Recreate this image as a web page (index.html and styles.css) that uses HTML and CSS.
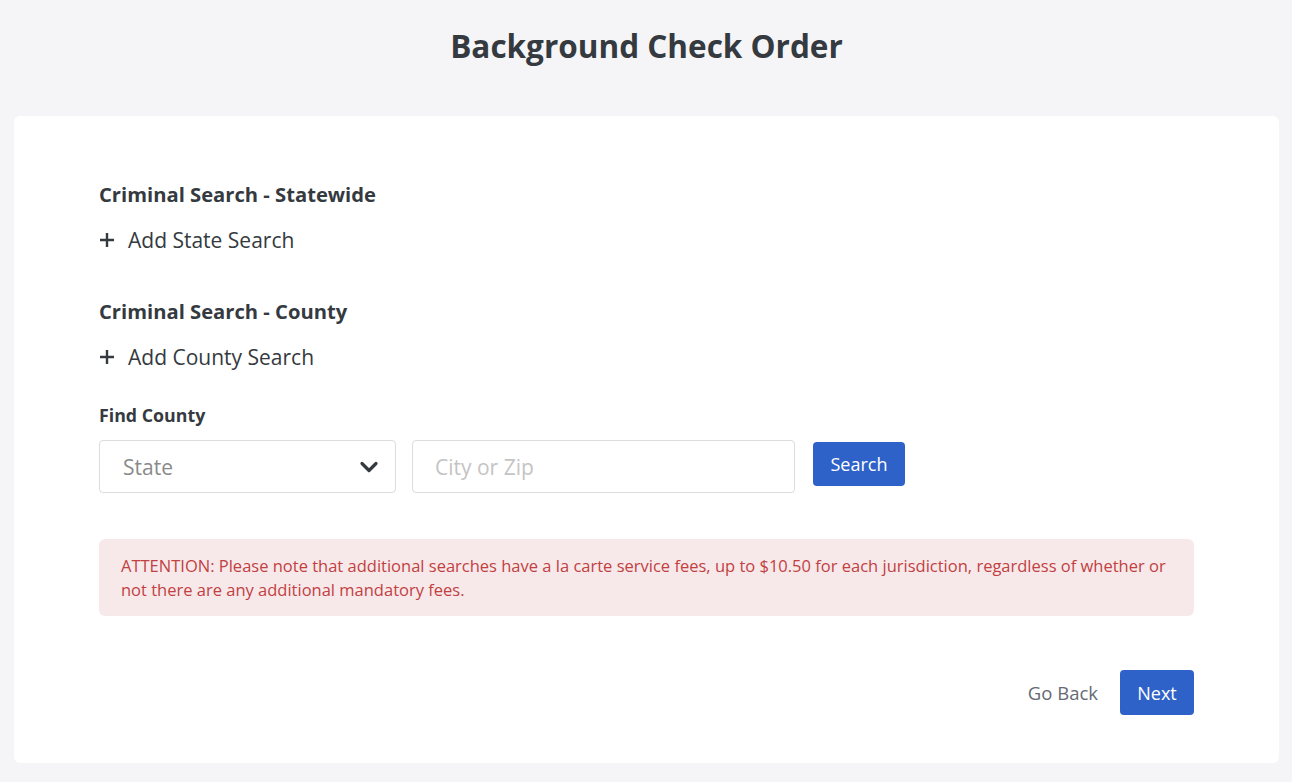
FILE: index.html
```html
<!DOCTYPE html>
<html lang="en">
<head>
    <meta charset="UTF-8">
    <meta name="viewport" content="width=device-width, initial-scale=1.0">
    <title>Background Check Order</title>
    <link rel="stylesheet" href="styles.css">
</head>
<body>
    <h1 class="page-title">Background Check Order</h1>
    <main class="card">
        <section class="search-group">
            <h2 class="group-title">Criminal Search - Statewide</h2>
            <button class="add-link">
                <svg class="plus" width="16" height="16" viewBox="0 0 16 16"><path d="M8 1V15M1 8H15" stroke="#343a40" stroke-width="2.4"/></svg>
                Add State Search
            </button>
        </section>
        <section class="search-group">
            <h2 class="group-title">Criminal Search - County</h2>
            <button class="add-link">
                <svg class="plus" width="16" height="16" viewBox="0 0 16 16"><path d="M8 1V15M1 8H15" stroke="#343a40" stroke-width="2.4"/></svg>
                Add County Search
            </button>
        </section>
        <div class="find-county">
            <label class="find-label">Find County</label>
            <div class="find-row">
                <div class="select-box">
                    <span class="placeholder">State</span>
                    <svg class="chevron" width="20" height="14" viewBox="0 0 20 14">
                        <path d="M3 3.5 L10 10.5 L17 3.5" fill="none" stroke="#343a40" stroke-width="3.2" stroke-linecap="round" stroke-linejoin="round"/>
                    </svg>
                </div>
                <input class="text-input" type="text" placeholder="City or Zip">
                <button class="btn-primary btn-search">Search</button>
            </div>
        </div>
        <div class="alert">
            ATTENTION: Please note that additional searches have a la carte service fees, up to $10.50 for each jurisdiction, regardless of whether or not there are any additional mandatory fees.
        </div>
        <footer class="actions">
            <button class="btn-link">Go Back</button>
            <button class="btn-primary btn-next">Next</button>
        </footer>
    </main>
</body>
</html>
```

FILE: styles.css
```css
/* Styles généraux */
body {
    font-family: "Open Sans", "Noto Sans", sans-serif;
    margin: 0;
    padding: 0 13px 19px 14px;
    background-color: #f5f5f7;
    color: #343a40;
}
.page-title {
    margin: 0;
    padding: 27px 0 51px;
    text-align: center;
    font-size: 31.5px;
    line-height: 38px;
    font-weight: 700;
}
.card {
    background-color: white;
    border-radius: 6px;
    padding: 64px 85px 48px;
}
.search-group {
    margin-bottom: 43px;
}
.group-title {
    margin: 0;
    font-size: 20.2px;
    line-height: 28px;
    font-weight: 700;
}
.add-link {
    display: flex;
    align-items: center;
    background: none;
    border: none;
    padding: 0;
    margin-top: 18px;
    font-family: inherit;
    font-size: 21px;
    line-height: 28px;
    color: #343a40;
    cursor: pointer;
}
.plus {
    margin-right: 13px;
}
.find-county {
    margin-top: -11px;
}
.find-label {
    display: block;
    font-size: 17.8px;
    line-height: 24px;
    font-weight: 700;
    margin-bottom: 13px;
}
.find-row {
    display: flex;
    align-items: center;
}
.select-box {
    box-sizing: border-box;
    width: 297px;
    height: 53px;
    border: 1px solid #dcdcdc;
    border-radius: 4px;
    display: flex;
    align-items: center;
    justify-content: space-between;
    padding: 0 16px 0 23px;
}
.placeholder {
    font-size: 21px;
    color: #8a8a8a;
}
.text-input {
    box-sizing: border-box;
    width: 383px;
    height: 53px;
    margin-left: 16px;
    border: 1px solid #dcdcdc;
    border-radius: 4px;
    padding: 0 22px;
    font-family: inherit;
    font-size: 21px;
    color: #343a40;
}
.text-input::placeholder {
    color: #c4c4c4;
}
.btn-primary {
    background-color: #2f62c8;
    border: none;
    color: white;
    border-radius: 4px;
    font-family: inherit;
    cursor: pointer;
}
.btn-search {
    margin-left: 18px;
    width: 92px;
    height: 44px;
    font-size: 18px;
    margin-top: -6px;
}
.alert {
    margin-top: 46px;
    background-color: #f7e9ea;
    color: #c23f42;
    border-radius: 6px;
    padding: 15px 22px 14px;
    font-size: 16.5px;
    line-height: 24px;
}
.actions {
    display: flex;
    justify-content: flex-end;
    align-items: center;
    margin-top: 54px;
}
.btn-link {
    background: none;
    border: none;
    padding: 0;
    font-family: inherit;
    font-size: 18.5px;
    color: #666a73;
    cursor: pointer;
    margin-right: 22px;
}
.btn-next {
    width: 74px;
    height: 45px;
    font-size: 18px;
}
```
